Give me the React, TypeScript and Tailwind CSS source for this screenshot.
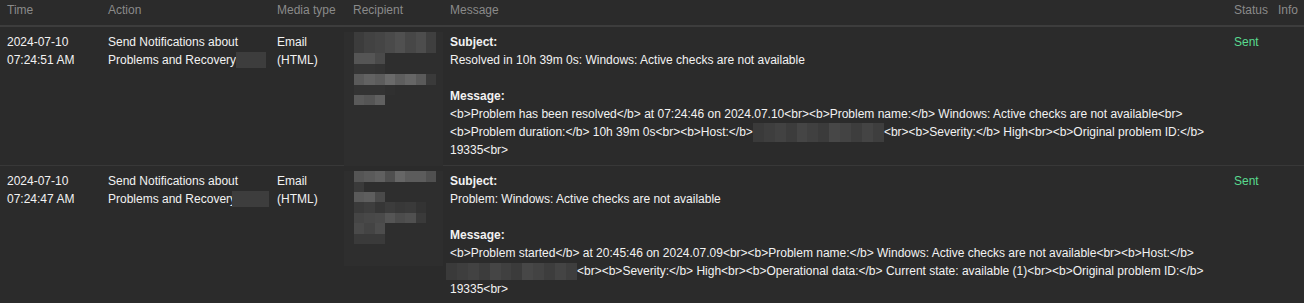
import React from 'react';

type BlurRow = { h: number; cells: string[] };

// pixelated (redacted) blocks, like the screenshot's blurred recipient names
function Pixelated({ rows, cell = 10.25 }: { rows: BlurRow[]; cell?: number }) {
    return (
        <div className="flex flex-col">
            {rows.map((r, i) => (
                <div key={i} className="flex" style={{ height: r.h }}>
                    {r.cells.map((c, j) => (
                        <div key={j} style={{ width: cell, height: r.h, background: c || 'transparent' }} />
                    ))}
                </div>
            ))}
        </div>
    );
}

function InlineBlur({ w, h, colors }: { w: number; h: number; colors: string[] }) {
    const cw = w / colors.length;
    return (
        <span className="inline-flex align-middle" style={{ width: w, height: h }}>
            {colors.map((c, i) => (
                <span key={i} className="block h-full" style={{ width: cw, background: c }} />
            ))}
        </span>
    );
}

const recipient1: BlurRow[] = [
    { h: 21, cells: ['#3c3c3c', '#424242', '#454545', '#4a4a4a', '#505050', '#474747', '#4d4d4d', '#3f3f3f'] },
    { h: 11, cells: ['#555555', '#555555', '#4a4a4a'] },
    { h: 10, cells: ['#353535', '#353535', '#333333'] },
    { h: 11, cells: ['#5a5a5a', '#626262', '#5c5c5c', '#6a6a6a', '#5e5e5e', '#666666', '#5a5a5a', '#3a3a3a'] },
    { h: 10, cells: ['#333333', '#333333', '#333333', '#303030'] },
    { h: 10, cells: ['#5a5a5a', '#555555', '#606060'] },
];

const recipient2: BlurRow[] = [
    { h: 11, cells: ['#555555', '#5a5a5a', '#606060', '#4f4f4f', '#666666', '#5c5c5c', '#5c5c5c', '#505050'] },
    { h: 10, cells: ['#3a3a3a'] },
    { h: 10, cells: ['#5a5a5a', '#5e5e5e', '#4a4a4a'] },
    { h: 11, cells: ['#3a3a3a', '#3e3e3e', '#363636', '#3c3c3c', '#383838', '#3a3a3a', '#333333'] },
    { h: 10, cells: ['#454545', '#484848', '#4a4a4a', '#555555', '#4c4c4c', '#505050', '#3a3a3a'] },
    { h: 11, cells: ['#4a4a4a', '#444444', '#4d4d4d'] },
    { h: 10, cells: ['#3a3a3a', '#3a3a3a', '#3a3a3a'] },
];

const hostBlur = ['#3a3a3a', '#3e3e3e', '#424242', '#3c3c3c', '#454545', '#404040', '#3b3b3b', '#474747', '#434343', '#3d3d3d', '#444444', '#3e3e3e'];

const headers = ['Time', 'Action', 'Media type', 'Recipient', 'Message', 'Status', 'Info'];

interface Entry {
    date: string;
    time: string;
    actionBlur: { w: number; ml: number };
    recipient: BlurRow[];
    subject: string;
    lines: React.ReactNode[];
}

const entries: Entry[] = [
    {
        date: '2024-07-10',
        time: '07:24:51 AM',
        actionBlur: { w: 30, ml: 0 },
        recipient: recipient1,
        subject: 'Resolved in 10h 39m 0s: Windows: Active checks are not available',
        lines: [
            '<b>Problem has been resolved</b> at 07:24:46 on 2024.07.10<br><b>Problem name:</b> Windows: Active checks are not available<br>',
            <>
                {'<b>Problem duration:</b> 10h 39m 0s<br><b>Host:</b>'}
                <InlineBlur w={131} h={19} colors={hostBlur} />
                {'<br><b>Severity:</b> High<br><b>Original problem ID:</b>'}
            </>,
            '19335<br>',
        ],
    },
    {
        date: '2024-07-10',
        time: '07:24:47 AM',
        actionBlur: { w: 37, ml: -4 },
        recipient: recipient2,
        subject: 'Problem: Windows: Active checks are not available',
        lines: [
            '<b>Problem started</b> at 20:45:46 on 2024.07.09<br><b>Problem name:</b> Windows: Active checks are not available<br><b>Host:</b>',
            <>
                <span className="-ml-1">
                    <InlineBlur w={131} h={17} colors={hostBlur} />
                </span>
                {'<br><b>Severity:</b> High<br><b>Operational data:</b> Current state: available (1)<br><b>Original problem ID:</b>'}
            </>,
            '19335<br>',
        ],
    },
];

export default function App() {
    const cell = 'pl-[7px] pt-[6px] pb-[6px] border-b border-[#383838]';
    return (
        <div className="w-[1304px] h-[303px] overflow-hidden bg-[#2b2b2b] text-[#f2f2f2] text-[12px] leading-[18px] font-['Liberation_Sans',Arial,sans-serif]">
            <div className="grid grid-cols-[101px_169px_76px_97px_784px_44px_33px]">
                {headers.map((h) => (
                    <div key={h} className="h-[27px] pl-[7px] pb-[5px] flex items-center text-[#8a8a8a] border-b-2 border-[#3d3d3d] whitespace-nowrap">
                        {h}
                    </div>
                ))}
                {entries.map((e, idx) => (
                    <React.Fragment key={idx}>
                        <div className={cell}>
                            <div>{e.date}</div>
                            <div>{e.time}</div>
                        </div>
                        <div className={cell}>
                            <div className="whitespace-nowrap">Send Notifications about</div>
                            <div className="whitespace-nowrap flex items-center">
                                Problems and Recovery
                                <span className="inline-block h-[16px] bg-[#3d3d3d]" style={{ width: e.actionBlur.w, marginLeft: e.actionBlur.ml }} />
                            </div>
                        </div>
                        <div className={cell}>
                            <div>Email</div>
                            <div>(HTML)</div>
                        </div>
                        <div className={`-ml-[2px] pt-[5px] border-b ${idx === 0 ? 'border-[#2e2e2e]' : 'border-[#383838]'}`}>
                            <div className={`bg-[#2e2e2e] pl-[10px] ${idx === 0 ? 'h-[133px]' : 'h-[95px]'}`}>
                                <Pixelated rows={e.recipient} />
                            </div>
                        </div>
                        <div className={`${cell} whitespace-nowrap`}>
                            <div className="font-bold">Subject:</div>
                            <div>{e.subject}</div>
                            <div className="h-[18px]" />
                            <div className="font-bold">Message:</div>
                            {e.lines.map((l, i) => (
                                <div key={i} className="flex items-center h-[18px]">{l}</div>
                            ))}
                        </div>
                        <div className={`${cell} text-[#59db8f]`}>Sent</div>
                        <div className={cell} />
                    </React.Fragment>
                ))}
            </div>
        </div>
    );
}
